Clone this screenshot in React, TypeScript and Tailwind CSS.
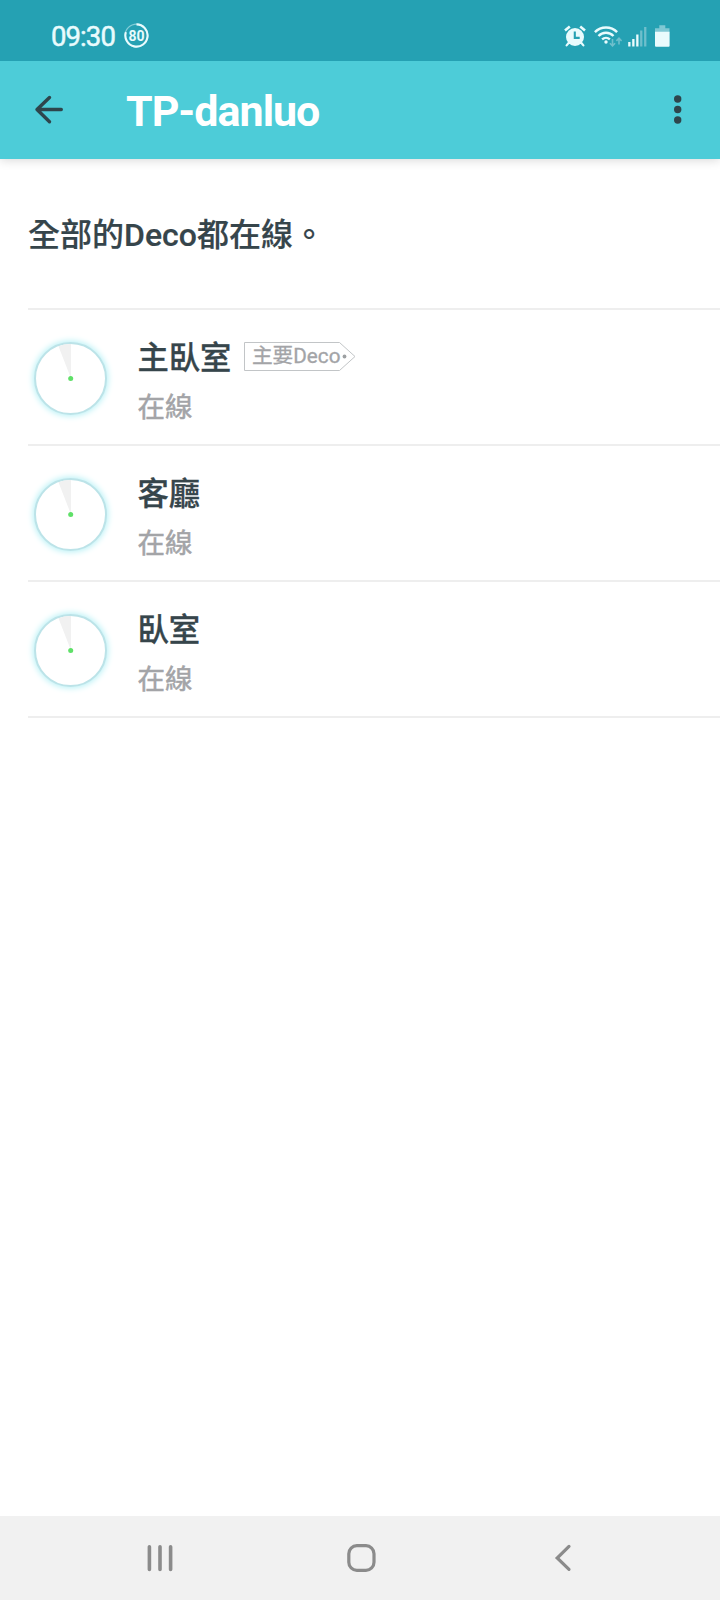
interface DecoUnit {
  id: string
  name: string
  status: string
  isMain?: boolean
}

const units: DecoUnit[] = [
  { id: 'master', name: '主臥室', status: '在線', isMain: true },
  { id: 'living', name: '客廳', status: '在線' },
  { id: 'bedroom', name: '臥室', status: '在線' },
]

function StatusBar() {
  return (
    <div className="relative z-10 flex h-[61px] items-center justify-between bg-[#25a1b3] pt-[10px] pr-[50px] pl-[51px] text-[#e9fbfd]">
      <div className="flex items-center">
        <span className="w-[73px] pt-[2px] text-[27.5px] leading-none tracking-[-0.9px] [-webkit-text-stroke:0.5px_currentColor]">09:30</span>
        {/* Battery percentage ring */}
        <div className="grid h-[25px] w-[25px] place-items-center">
          <svg viewBox="0 0 25 25" className="col-start-1 row-start-1 h-[25px] w-[25px]" fill="none">
            <circle cx="12.5" cy="12.5" r="11.4" stroke="#84cdd8" strokeWidth="1.2" />
            <path d="M12.5 1.4A11.1 11.1 0 1 1 1.9 9.1" stroke="currentColor" strokeWidth="2.1" />
          </svg>
          <span className="col-start-1 row-start-1 text-[14px] leading-none font-bold">80</span>
        </div>
      </div>
      <div className="flex items-center">
        <svg viewBox="0 0 22 22" className="h-[22px] w-[22px]" fill="none">
          <circle cx="11" cy="12" r="9" fill="currentColor" />
          <path d="M4.8 17.8l-2.2 2.6M17.2 17.8l2.2 2.6" stroke="currentColor" strokeWidth="2.2" strokeLinecap="round" />
          <path d="M1 5.4l4.8-4M21 5.4l-4.8-4" stroke="currentColor" strokeWidth="2.6" />
          <path d="M10.8 6.6v6.3h4.9" stroke="#25a1b3" strokeWidth="2.1" />
        </svg>
        <svg viewBox="0 0 28 22" className="ml-[8px] h-[22px] w-[28px]" fill="none">
          <path d="M.9 7.2a15.4 15.4 0 0 1 22.2 0" stroke="currentColor" strokeWidth="2.4" />
          <path d="M4.5 11a10.4 10.4 0 0 1 15 0" stroke="currentColor" strokeWidth="2.4" />
          <path d="M8.1 14.4a5.6 5.6 0 0 1 7.8 0" stroke="currentColor" strokeWidth="2.3" />
          <circle cx="12" cy="17" r="1.7" fill="currentColor" />
          <path d="M18.5 14v6.6M15.9 18.2l2.6 2.7 2.6-2.7M25 19.4v-6.2M22.4 15.9l2.6-2.7 2.6 2.7" stroke="#6fbfcc" strokeWidth="1.6" />
        </svg>
        <svg viewBox="0 0 19 22" className="ml-[6px] h-[22px] w-[19px]" fill="currentColor">
          <path d="M.2 17h2.3v4.5H.2zM4.2 14h2.3v7.5H4.2zM8.2 9.5h2.3v12H8.2z" />
          <path d="M12.1 5.5h2.3v16h-2.3zM16.1 2h2.3v19.5h-2.3z" fill="#6fbfcc" />
        </svg>
        <svg viewBox="0 0 15 22" className="ml-[8px] h-[22px] w-[15px]">
          <path d="M4.3.2h6v3h4.2v4H0v-4h4.3z" fill="#7fc8d4" />
          <path d="M0 6.7h14.6v14a1 1 0 0 1-1 1H1a1 1 0 0 1-1-1z" fill="currentColor" />
        </svg>
      </div>
    </div>
  )
}

function AppBar({ title }: { title: string }) {
  return (
    <header className="flex h-[98px] items-center bg-[#4dccd8] pr-[38px] pl-[34px] text-[#2e454c] shadow-[0_1px_10px_rgba(0,0,0,0.16)]">
      <svg viewBox="0 0 32 32" className="h-[32px] w-[32px]" fill="none" stroke="currentColor" strokeWidth="3.4" strokeLinecap="round" strokeLinejoin="round">
        <path d="M27.3 15.5H3M15.5 3.5L3 15.5l12.5 12.2" />
      </svg>
      <h1 className="ml-[60px] pt-[3px] text-[43px] leading-none font-bold tracking-[-1px] text-white">{title}</h1>
      <svg viewBox="0 0 8 30" className="ml-auto h-[30px] w-[8px]" fill="currentColor">
        <circle cx="3.7" cy="4" r="3.7" />
        <circle cx="3.7" cy="14.5" r="3.7" />
        <circle cx="3.7" cy="25" r="3.7" />
      </svg>
    </header>
  )
}

function DecoIcon() {
  return (
    <div className="h-[73px] w-[73px] rounded-full border-2 border-[#bce3e8] bg-white shadow-[0_0_6px_1px_#b4f0f5]">
      <svg viewBox="0 0 69 69" className="h-full w-full">
        <path d="M35 34.5V0a34.5 34.5 0 0 0-12.5 2.2z" fill="#f1f1f1" />
        <circle cx="34.7" cy="34.5" r="2.5" fill="#5fe068" />
      </svg>
    </div>
  )
}

function MainTag() {
  return (
    <div className="grid h-[30px] w-[112px] items-center">
      <svg viewBox="0 0 112 30" className="col-start-1 row-start-1 h-[30px] w-[112px]" fill="none">
        <path d="M.5.5h95l15.5 14-15.5 14H.5z" stroke="#c2c5c7" />
        <circle cx="100.5" cy="14.5" r="1.9" fill="#9da0a2" />
      </svg>
      <span className="col-start-1 row-start-1 pl-[8px] text-[20.7px] leading-none whitespace-nowrap text-[#a3a4a7] [-webkit-text-stroke:0.3px_currentColor]">主要Deco</span>
    </div>
  )
}

function UnitRow({ unit }: { unit: DecoUnit }) {
  return (
    <li className="flex h-[136px] border-b-2 border-[#eeeeee] pt-[32px] pl-[6px]">
      <DecoIcon />
      <div className="ml-[30.5px]">
        <div className="flex h-[32px] items-center">
          <span className="pt-[1px] text-[31.3px] leading-none font-medium text-[#36454b] [-webkit-text-stroke:0.3px_currentColor]">{unit.name}</span>
          {unit.isMain && (
            <div className="ml-[12.5px] pb-[3px]">
              <MainTag />
            </div>
          )}
        </div>
        <p className="mt-[20px] text-[27.5px] leading-none text-[#a3a4a7] [-webkit-text-stroke:0.5px_currentColor]">{unit.status}</p>
      </div>
    </li>
  )
}

function NavBar() {
  return (
    <nav className="flex h-[84px] items-center bg-[#f1f1f1] pl-[147px] text-[#8b8b8b]">
      <svg viewBox="0 0 26 28" className="h-[28px] w-[26px]" fill="none" stroke="currentColor" strokeWidth="3.6" strokeLinecap="round">
        <path d="M2.4 2.8v22.6M13 2.8v22.6M23.6 2.8v22.6" />
      </svg>
      <svg viewBox="0 0 29 28" className="ml-[174px] h-[28px] w-[29px]" fill="none" stroke="currentColor" strokeWidth="3.2">
        <rect x="1.8" y="1.7" width="25.2" height="24.6" rx="8" />
      </svg>
      <svg viewBox="0 0 18 28" className="ml-[178px] h-[28px] w-[18px]" fill="none" stroke="currentColor" strokeWidth="3.2" strokeLinecap="round">
        <path d="M15 2.4L3.2 14 15 25.4" />
      </svg>
    </nav>
  )
}

export default function App() {
  return (
    <div className="flex h-[1600px] w-[720px] flex-col overflow-hidden bg-white font-[Roboto,'Noto_Sans_CJK_TC',sans-serif]">
      <StatusBar />
      <AppBar title="TP-danluo" />
      <main className="flex-1 pl-[28px]">
        <div className="flex h-[151px] items-center border-b-2 border-[#eeeeee] pt-[2px]">
          <p className="text-[32px] leading-none font-medium text-[#36454b] [-webkit-text-stroke:0.2px_currentColor]">全部的Deco都在線。</p>
        </div>
        <ul>
          {units.map((unit) => (
            <UnitRow key={unit.id} unit={unit} />
          ))}
        </ul>
      </main>
      <NavBar />
    </div>
  )
}
